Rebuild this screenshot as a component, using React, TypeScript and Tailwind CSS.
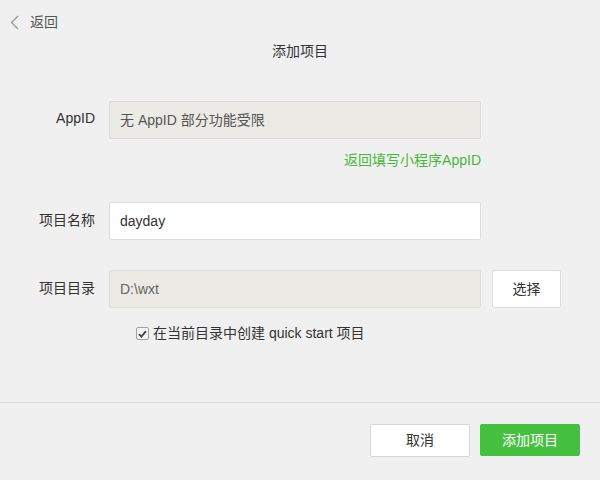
import { useState } from 'react';

const FONT = "font-['Liberation_Sans','Noto_Sans_CJK_SC',sans-serif]";

export default function App() {
  const [name, setName] = useState('dayday');
  const [quickStart, setQuickStart] = useState(true);

  return (
    <div className={`${FONT} w-[600px] h-[480px] bg-[#f0f0f0] text-[14px] text-[#333] flex flex-col`}>
      {/* top bar */}
      <div className="h-[44px] flex items-center pl-[10px]">
        <button className="flex items-center gap-[11px] text-[14px] text-[#555]">
          <svg width="9" height="15" viewBox="0 0 9 15" fill="none">
            <path d="M8 1L1.5 7.5L8 14" stroke="#9a9a9a" strokeWidth="1.3" />
          </svg>
          <span>返回</span>
        </button>
      </div>
      <div className="text-center leading-[14px] h-[14px] text-[#333]">添加项目</div>

      <div className="flex-1 mt-[43px]">
        {/* AppID */}
        <div className="flex items-center">
          <label className="w-[95px] text-right pb-[3px]">AppID</label>
          <div className="ml-[14px] w-[372px] h-[38px] bg-[#ebeae5] border border-[#dddddd] rounded-[2px] flex items-center px-[10px] text-[#555]">
            无 AppID 部分功能受限
          </div>
        </div>
        <div className="w-[481px] text-right mt-[13px] text-[#48b83c] leading-[16px]">返回填写小程序AppID</div>

        {/* 项目名称 */}
        <div className="flex items-center mt-[34px]">
          <label className="w-[95px] text-right pb-[2px]">项目名称</label>
          <input
            value={name}
            onChange={(e) => setName(e.target.value)}
            className="ml-[14px] w-[372px] h-[38px] bg-white border border-[#dddddd] rounded-[2px] px-[10px] text-[#333] outline-none"
          />
        </div>

        {/* 项目目录 */}
        <div className="flex items-center mt-[30px]">
          <label className="w-[95px] text-right pb-[2px]">项目目录</label>
          <div className="ml-[14px] w-[372px] h-[38px] bg-[#ebeae5] border border-[#dddddd] rounded-[2px] flex items-center px-[10px] text-[#666]">
            D:\wxt
          </div>
          <button className="ml-[11px] w-[69px] h-[38px] bg-white border border-[#dddddd] rounded-[2px] text-[#333]">
            选择
          </button>
        </div>

        <label className="flex items-center ml-[136px] mt-[15px] gap-[4px] cursor-pointer w-fit">
          <span
            onClick={() => setQuickStart(!quickStart)}
            className="w-[13px] h-[13px] border border-[#a0a0a0] rounded-[2px] bg-[#f4f4f4] flex items-center justify-center"
          >
            {quickStart && (
              <svg width="9" height="8" viewBox="0 0 9 8">
                <path d="M1 4.2L3.4 6.6L8 1.2" stroke="#444" strokeWidth="1.8" fill="none" />
              </svg>
            )}
          </span>
          <span className="text-[#333]">在当前目录中创建 quick start 项目</span>
        </label>
      </div>

      {/* footer */}
      <div className="border-t border-[#d9d9d9] h-[78px] flex items-start justify-end pr-[20px] pt-[21px] gap-[10px]">
        <button className="w-[100px] h-[33px] bg-white border border-[#d6d6d6] rounded-[2px] text-[#333]">取消</button>
        <button className="w-[100px] h-[32px] bg-[#46c13f] rounded-[2px] text-white">添加项目</button>
      </div>
    </div>
  );
}
